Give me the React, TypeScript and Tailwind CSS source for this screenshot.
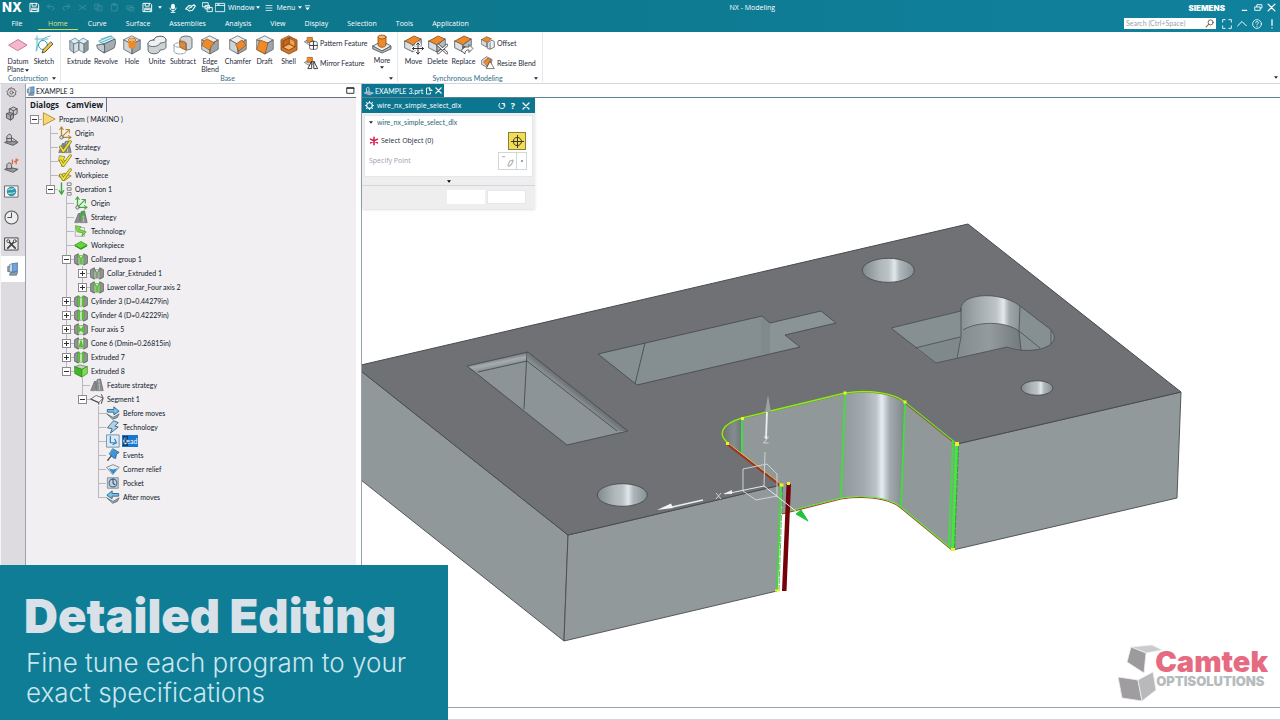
import React from "react";

/* ---------- shared drawing helpers ---------- */

type SvgProps = { children: React.ReactNode; size?: string; box?: string };

function Glyph({ children, size = "size-4", box = "0 0 16 16" }: SvgProps) {
  return (
    <svg viewBox={box} className={`${size} shrink-0`} fill="none" aria-hidden="true" strokeLinejoin="round" strokeLinecap="round">
      {children}
    </svg>
  );
}

function Caret({ className = "text-gray-800" }: { className?: string }) {
  return (
    <svg viewBox="0 0 6 4" className={`h-[3px] w-[4px] shrink-0 ${className}`} aria-hidden="true">
      <path d="M0 0h6L3 4z" fill="currentColor" />
    </svg>
  );
}

const OR = "#ef8a2b";
const EDGE = "#4b5055";

function Cube({ top = "#eceeef", left = "#cfd4d7", right = "#9da5a9" }: { top?: string; left?: string; right?: string }) {
  return (
    <g stroke={EDGE} strokeWidth=".7">
      <path d="M10 1l8 4-8 4.500-8-4.500z" fill={top} />
      <path d="M2 5l8 4.500V19l-8-4.500z" fill={left} />
      <path d="M18 5l-8 4.500V19l8-4.500z" fill={right} />
    </g>
  );
}

/* low solid whose top face is orange */
function Slab() {
  return (
    <g strokeWidth=".8">
      <path d="M1 6l9-5 7 3-8 6z" fill={OR} stroke="#8c4a10" />
      <path d="M1 6l8 4v7l-8-4z" fill="#dde0e2" stroke={EDGE} />
      <path d="M17 4l-8 6v7l8-6z" fill="#b5bbbf" stroke={EDGE} />
    </g>
  );
}

const ribbonIcons: Record<string, React.ReactNode> = {
  datum: <path d="M1 10l9-5.500 9 5.500-9 5.500z" fill="#f6b6cf" stroke="#b0647f" strokeWidth=".8" />,
  sketch: (
    <>
      <path d="M3 1v14M1 4h13M2 16C3 8 8 3 16 1" stroke="#5fb9cb" strokeWidth="1" />
      <circle cx="9" cy="10" r="4.500" stroke="#3a9db5" strokeWidth="1" />
      <path d="M17 7l2 2-8 8-3 1 1-3z" fill="#f2c230" stroke="#3b3b3b" strokeWidth=".8" />
    </>
  ),
  extrude: (
    <g stroke="#55707a" strokeWidth=".7">
      <path d="M1 6l5-3 4 3 4-3 5 3-4 3-5-2-5 2z" fill="#d5f0f6" />
      <path d="M1 6l4 3v9l-4-3z" fill="#b7c0c5" />
      <path d="M5 9l5-2v8l-5 3zM10 7l5 2v9l-5-3z" fill="#d9dee1" />
      <path d="M19 6l-4 3v9l4-3z" fill="#8c969c" />
    </g>
  ),
  revolve: (
    <g strokeWidth=".8">
      <path d="M3 6L15 1l4 3L8 9z" fill="#d5f0f6" stroke="#4aa8bd" />
      <path d="M1 10L8 9c1 3 1 6 0 9l-6-4z" fill="#c5ccd0" stroke={EDGE} />
      <path d="M8 9l11-5c1 4 0 7-1 9L8 18c1-3 1-6 0-9z" fill="#a5adb2" stroke={EDGE} />
      <path d="M5 4l10-3M4 8l12-5" stroke="#4aa8bd" />
    </g>
  ),
  hole: (
    <>
      <Cube />
      <ellipse cx="10" cy="5" rx="4" ry="2" fill="#f7b36b" stroke="#a85b12" strokeWidth=".6" />
      <path d="M6.500 6v6c1 2 6 2 7 0V6c-1 1.500-6 1.500-7 0z" fill={OR} />
    </>
  ),
  unite: (
    <g stroke={EDGE} strokeWidth=".8">
      <path d="M7 5c0-5 12-5 12 0v7c0 2-3 3-6 3 0 5-12 5-12 0V9c0-2 3-4 6-4z" fill="#ccd1d4" />
      <path d="M7 5c0-5 12-5 12 0 0 2-3 3-6 3 0 4-12 5-12 1 0-3 3-4 6-4z" fill="#eef0f1" />
    </g>
  ),
  subtract: (
    <g strokeWidth=".8">
      <path d="M7 4c0-4 12-4 12 0v8c0 2-3 3-6 3V8c-2-1-5-1-6-1z" fill="#d0d5d8" stroke={EDGE} />
      <path d="M7 6c4 0 6 1 6 3v6c-3-1-5-2-6-3z" fill={OR} stroke="#8c4a10" />
      <path d="M1 10c0-3 12-3 12 0v6c0 4-12 4-12 0zM1 10c0 3 12 3 12 0" stroke="#7e868a" strokeDasharray="2 1" />
    </g>
  ),
  edge: (
    <>
      <Cube />
      <path d="M2 10c1-4 3-5 5-6l8 4c-3 1-4 3-5 7z" fill={OR} stroke="#8c4a10" strokeWidth=".7" />
    </>
  ),
  chamfer: (
    <>
      <Cube />
      <path d="M8 9l6-4 4 5-7 6z" fill={OR} stroke="#8c4a10" strokeWidth=".7" />
    </>
  ),
  draft: (
    <>
      <Cube />
      <path d="M5 5l8 3-3 11-8-4z" fill={OR} stroke="#8c4a10" strokeWidth=".7" />
    </>
  ),
  shell: (
    <g stroke="#7a4310" strokeWidth=".8">
      <path d="M10 1l8 4v10l-8 4-8-4V5z" fill="#d3762a" />
      <path d="M10 3l6 3v6l-6-3z" fill="#f0a050" />
      <path d="M10 3L4 6v6l6-3z" fill="#c4661c" />
      <path d="M4 12l6-3 6 3-6 3z" fill="#f9b565" />
    </g>
  ),
  more: (
    <g strokeWidth=".8">
      <path d="M1 12l9-5 9 5-9 5z" fill="#eceeef" stroke={EDGE} />
      <path d="M1 12l9 5 9-5v3l-9 4-9-4z" fill="#b1b7ba" stroke={EDGE} />
      <path d="M6 3v8c1 3 7 3 8 0V3z" fill={OR} stroke="#8c4a10" />
      <ellipse cx="10" cy="3" rx="4" ry="2" fill="#f7b36b" stroke="#8c4a10" />
    </g>
  ),
  move: (
    <>
      <Slab />
      <path d="M14 8v11M8.500 13.500h11M12.500 9.500L14 8l1.500 1.500M12.500 17.500L14 19l1.500-1.500M10 12l-1.500 1.500L10 15M18 12l1.500 1.500L18 15" stroke="#fff" strokeWidth="3" />
      <path d="M14 8v11M8.500 13.500h11M12.500 9.500L14 8l1.500 1.500M12.500 17.500L14 19l1.500-1.500M10 12l-1.500 1.500L10 15M18 12l1.500 1.500L18 15" stroke="#333" />
    </>
  ),
  delete: (
    <>
      <Slab />
      <path d="M10 10l9 8M19 10l-9 8" stroke="#444" strokeWidth="2.600" />
      <path d="M10 10l9 8M19 10l-9 8" stroke="#fff" strokeWidth="1.200" />
    </>
  ),
  replace: (
    <>
      <Slab />
      <path d="M9 12h6V9.500l4 4-4 4V15h-2l-2 2v2l-4-3.500L11 12z" fill="#f5f5f5" stroke="#444" strokeWidth=".8" />
    </>
  ),
  pattern: (
    <g strokeWidth=".9">
      <path d="M1 8l7-4 8 4-7 5z" fill="#d5d9dc" stroke={EDGE} />
      <path d="M5 2h7v7H5z" fill={OR} stroke="#8c4a10" />
      <rect x="8" y="8" width="11" height="11" rx="2" fill="#fff" stroke="#333" />
      <path d="M13.500 8v11M8 13.500h11" stroke="#333" strokeWidth="1.400" />
    </g>
  ),
  mirror: (
    <g strokeWidth=".9">
      <path d="M1 9l7-4 8 4-7 5z" fill="#d5d9dc" stroke={EDGE} />
      <path d="M5 2h7v7H5z" fill={OR} stroke="#8c4a10" />
      <path d="M11 8v10H6zM14 8v10h5z" fill="#fff" stroke="#222" strokeWidth="1.200" />
    </g>
  ),
  offset: (
    <g strokeWidth=".9">
      <path d="M1 5l7-4 7 3-7 5z" fill={OR} stroke="#8c4a10" />
      <path d="M1 5l7 4v7l-7-4z" fill="#d5d9dc" stroke={EDGE} />
      <path d="M10 9l6-3 3 2v8l-6 3-3-1z" fill="#eef0f1" stroke="#333" />
      <path d="M13 10v8" stroke="#333" />
    </g>
  ),
  resize: (
    <g strokeWidth=".9">
      <path d="M1 6l7-5 8 4-2 8-6 3-7-4z" fill="#d5d9dc" stroke={EDGE} />
      <path d="M4 8l6-5 5 3-6 8z" fill={OR} stroke="#8c4a10" />
      <path d="M13 8l6 10H8z" fill="#fff" stroke="#333" />
    </g>
  ),
};

/* ---------- header ---------- */

function IconButton({ label, children, className = "" }: { label: string; children: React.ReactNode; className?: string }) {
  return (
    <button type="button" aria-label={label} className={`flex items-center justify-center ${className}`}>
      {children}
    </button>
  );
}

function SaveIcon() {
  return (
    <Glyph size="size-[11px]">
      <path d="M2 2h10l2 2v10H2zM4.500 2v4h6V2M4 14V9h8v5M5.500 11h5" stroke="#fff" strokeWidth="1.400" />
    </Glyph>
  );
}

function TitleBar() {
  return (
    <div className="flex h-[15px] items-center text-white">
      <div className="flex basis-[57%] items-center">
        <span className="w-[28px] pl-[2px] font-['Inter',sans-serif] text-[13px] leading-[15px] font-extrabold">NX</span>
        <IconButton label="Save" className="w-[12px]"><SaveIcon /></IconButton>
        <div className="ml-[6px] flex w-[94px] items-center gap-[7px] opacity-20">
          <IconButton label="Undo"><Glyph size="size-[9px]"><path d="M3 6h8c4 0 4 7 0 7M6 2L2 6l4 4" stroke="#fff" strokeWidth="1.600" /></Glyph></IconButton>
          <IconButton label="Redo"><Glyph size="size-[9px]"><path d="M13 6H5c-4 0-4 7 0 7M10 2l4 4-4 4" stroke="#fff" strokeWidth="1.600" /></Glyph></IconButton>
          <IconButton label="Cut"><Glyph size="size-[9px]"><path d="M2 4l12 8M2 12l12-8" stroke="#fff" strokeWidth="1.600" /></Glyph></IconButton>
          <IconButton label="Copy"><Glyph size="size-[9px]"><path d="M2 2h7v9H2zM6 5h8v9H6z" stroke="#fff" strokeWidth="1.400" /></Glyph></IconButton>
          <IconButton label="Paste"><Glyph size="size-[9px]"><path d="M3 3h10v11H3zM6 1h4v3H6z" stroke="#fff" strokeWidth="1.400" /></Glyph></IconButton>
          <IconButton label="Repeat"><Glyph size="size-[9px]"><path d="M2 5h9v6H2zM6 8h8v6H6z" stroke="#fff" strokeWidth="1.400" /></Glyph></IconButton>
        </div>
        <IconButton label="Save options" className="ml-[2px] gap-[5px]"><SaveIcon /><Caret className="text-white" /></IconButton>
        <IconButton label="Voice" className="ml-[4px] w-[14px]">
          <Glyph size="size-[10px]"><rect x="5" y="1" width="6" height="9" rx="3" fill="#fff" /><path d="M3 8c0 6 10 6 10 0M8 12v3M5 15h6" stroke="#fff" strokeWidth="1.400" /></Glyph>
        </IconButton>
        <IconButton label="Touch mode" className="ml-[3px] w-[14px]">
          <Glyph size="size-[11px]"><path d="M1 10l5-5 4 1 3-2 2 2-4 6-5 1-2-2z" stroke="#fff" strokeWidth="1.600" /><path d="M6 9l4-2" stroke="#fff" strokeWidth="1.600" /></Glyph>
        </IconButton>
        <IconButton label="Switch window" className="ml-[3px] w-[14px]">
          <Glyph size="size-[11px]"><path d="M1 1h8v6H1zM5 5h6v5H5zM8 8h7v6H8z" fill="#0d7689" stroke="#fff" strokeWidth="1.300" /></Glyph>
        </IconButton>
        <button type="button" className="ml-px flex items-center gap-[2px]">
          <Glyph size="size-[11px]"><path d="M1 2h13v12H1zM1 5h13M4 3.500h2" stroke="#fff" strokeWidth="1.200" /></Glyph>
          <span>Window</span><Caret className="text-white" />
        </button>
        <button type="button" className="ml-[5px] flex items-center gap-[3px]">
          <Glyph size="size-[8px]"><path d="M2 3h12M2 8h12M2 13h12" stroke="#fff" strokeWidth="1.400" /></Glyph>
          <span>Menu</span><Caret className="text-white" />
        </button>
        <IconButton label="Toolbar options" className="ml-[2px]">
          <Glyph size="size-[7px]"><path d="M3 4h10" stroke="#fff" strokeWidth="2" /><path d="M3 8h10l-5 6z" fill="#fff" /></Glyph>
        </IconButton>
      </div>
      <h1>NX - Modeling</h1>
      <div className="ml-auto flex items-center pr-[3px]">
        <span className="mr-[13px] font-['Inter',sans-serif] text-[8px] font-black">SIEMENS</span>
        <IconButton label="Minimize" className="w-[12px]"><Glyph size="size-[9px]"><path d="M4 13h8" stroke="#fff" strokeWidth="2" /></Glyph></IconButton>
        <IconButton label="Restore" className="ml-[2px] w-[12px]"><Glyph size="size-[9px]"><path d="M2 7h9v6H2zM5 7V3h9v6h-3" stroke="#fff" strokeWidth="1.600" /></Glyph></IconButton>
        <IconButton label="Close" className="ml-[2px] w-[11px]"><Glyph size="size-[9px]"><path d="M2 2l12 12M14 2L2 14" stroke="#fff" strokeWidth="2.200" /></Glyph></IconButton>
      </div>
    </div>
  );
}

const menus = ["Curve", "Surface", "Assemblies", "Analysis", "View", "Display", "Selection", "Tools", "Application"];

function MenuBar() {
  return (
    <div className="flex h-[17px] items-stretch text-white">
      <nav className="flex items-stretch gap-px">
        <button type="button" className="w-[37px] pr-[3px] text-center">File</button>
        <button type="button" className="mb-[2px] border-b border-[#d8d35a] px-[10px] pt-[3px] text-[#dfe08a]">Home</button>
        {menus.map((m) => (
          <button key={m} type="button" className="px-[9px]">{m}</button>
        ))}
      </nav>
      <div className="ml-auto flex items-center gap-[5px] pr-[3px]">
        <label className="mr-px flex h-[11px] w-[92px] items-center bg-white pr-[2px]">
          <span className="sr-only">Search</span>
          <input type="text" placeholder="Search (Ctrl+Space)" className="h-[11px] min-w-0 flex-1 px-[2px] font-['Lato',sans-serif] text-[7px] leading-[11px] text-gray-700 outline-none placeholder:text-gray-400" />
          <Glyph size="size-[9px]"><circle cx="10" cy="6" r="4.500" stroke="#444" strokeWidth="1.400" /><path d="M7 9l-5 5" stroke="#a06a3a" strokeWidth="2" /></Glyph>
        </label>
        <IconButton label="Full screen"><Glyph size="size-[10px]"><path d="M1 5V1h4M11 1h4v4M15 11v4h-4M5 15H1v-4" stroke="#fff" strokeWidth="1.400" /></Glyph></IconButton>
        <IconButton label="Collapse ribbon"><Glyph size="size-[10px]"><path d="M1 11l7-7 7 7" stroke="#fff" strokeWidth="1.600" /></Glyph></IconButton>
        <IconButton label="Help">
          <Glyph size="size-[10px]"><circle cx="8" cy="8" r="7" stroke="#fff" strokeWidth="1.300" /><path d="M6 6c0-3 4-3 4 0 0 2-2 1.500-2 3.500M8 12v.2" stroke="#fff" strokeWidth="1.400" /></Glyph>
        </IconButton>
        <IconButton label="Notifications"><Glyph size="size-[10px]"><path d="M8 1v9M8 14v.5" stroke="#fff" strokeWidth="2" /></Glyph></IconButton>
      </div>
    </div>
  );
}

/* ---------- ribbon ---------- */

function Tool({ icon, label, width, drop }: { icon: string; label: string; width: string; drop?: "inline" | "below" }) {
  return (
    <button type="button" className={`flex flex-col items-center ${width}`}>
      <Glyph size="size-[20px]" box="0 0 20 20">{ribbonIcons[icon]}</Glyph>
      <span className="mt-[2px] text-center leading-[8px]">
        {label}
        {drop === "inline" && <span className="ml-px inline-block align-middle"><Caret /></span>}
      </span>
      {drop === "below" && <span className="mt-[2px]"><Caret /></span>}
    </button>
  );
}

function SmallTool({ icon, label }: { icon: string; label: string }) {
  return (
    <button type="button" className="flex h-[20px] items-center gap-[2px] whitespace-nowrap">
      <Glyph size="size-[14px]" box="0 0 20 20">{ribbonIcons[icon]}</Glyph>
      {label}
    </button>
  );
}

function Group({ name, children, className = "" }: { name: string; children: React.ReactNode; className?: string }) {
  return (
    <section className={`flex flex-col border-r border-gray-200 ${className}`}>
      <div className="flex flex-1">{children}</div>
      <div className="flex h-[8px] items-center">
        <h2 className="flex-1 text-center leading-[8px] text-[#2f6c84]">{name}</h2>
        <Caret />
      </div>
    </section>
  );
}

function Ribbon() {
  return (
    <div className="flex h-[52px] items-stretch border-b border-gray-300 bg-white pb-px font-['Lato',sans-serif] text-[7px] text-gray-800">
      <Group name="Construction" className="pr-[4px] pl-[4px]">
        <div className="flex pt-[3px]">
          <Tool icon="datum" label="Datum Plane" width="w-[28px]" drop="inline" />
          <Tool icon="sketch" label="Sketch" width="w-[24px]" />
        </div>
      </Group>
      <Group name="Base" className="pr-[4px] pl-[5px]">
        <div className="flex pt-[3px]">
          <Tool icon="extrude" label="Extrude" width="w-[26px]" />
          <Tool icon="revolve" label="Revolve" width="w-[28px]" />
          <Tool icon="hole" label="Hole" width="w-[24px]" />
          <Tool icon="unite" label="Unite" width="w-[26px]" />
          <Tool icon="subtract" label="Subtract" width="w-[26px]" />
          <Tool icon="edge" label="Edge Blend" width="w-[28px]" />
          <Tool icon="chamfer" label="Chamfer" width="w-[28px]" />
          <Tool icon="draft" label="Draft" width="w-[25px]" />
          <Tool icon="shell" label="Shell" width="w-[23px]" />
        </div>
        <div className="w-[71px] pt-px pl-[4px]">
          <SmallTool icon="pattern" label="Pattern Feature" />
          <SmallTool icon="mirror" label="Mirror Feature" />
        </div>
        <div className="pt-[2px]">
          <Tool icon="more" label="More" width="w-[22px]" drop="below" />
        </div>
      </Group>
      <Group name="Synchronous Modeling" className="pr-[4px] pl-[3px]">
        <div className="flex pt-[3px]">
          <Tool icon="move" label="Move" width="w-[25px]" />
          <Tool icon="delete" label="Delete" width="w-[23px]" />
          <Tool icon="replace" label="Replace" width="w-[29px]" />
        </div>
        <div className="w-[60px] pt-px pl-[3px]">
          <SmallTool icon="offset" label="Offset" />
          <SmallTool icon="resize" label="Resize Blend" />
        </div>
      </Group>
      <div className="ml-auto self-end pr-[2px] pb-[3px]"><Caret /></div>
    </div>
  );
}

/* ---------- resource bar ---------- */

const barIcons: { label: string; art: React.ReactNode }[] = [
  { label: "Assembly Navigator", art: <g stroke="#555" strokeWidth="1"><path d="M6 3l4-2 4 2v5l-4 2-4-2z" fill="#c9c9cb" /><path d="M6 3l4 2 4-2M10 5v5" /><path d="M3 8l3-1 4 1v5l-3 2-4-2zM3 8l4 2 3-2M7 10v5" fill="#aaa" /></g> },
  { label: "Constraint Navigator", art: <g stroke="#555" strokeWidth="1"><path d="M1 11l5-2 9 2-5 3z" fill="#999" /><path d="M3 10V5c2-4 5-3 5 0v5z" fill="#c6c6c8" /><path d="M8 6l6 4M3 7h5" /></g> },
  { label: "Part Navigator", art: <g stroke="#555" strokeWidth="1"><path d="M1 12l5-2 9 2-5 3z" fill="#999" /><path d="M3 11V7c2-3 5-2 5 1v3z" fill="#c6c6c8" /><path d="M9 2v4M13 1v5M11 4l4-2" stroke="#e2673c" strokeWidth="1.400" /></g> },
  { label: "Web Browser", art: <g><rect x="1" y="2" width="14" height="12" fill="#f3f6f8" stroke="#666" /><circle cx="8" cy="8" r="5" fill="#2f93ab" /><path d="M5 6c2-2 3 1 5-1M5 10c2-1 4 1 6-1" stroke="#bfe6d0" strokeWidth="1.200" /></g> },
  { label: "History", art: <g stroke="#555" strokeWidth="1.100"><circle cx="8" cy="8" r="7" fill="#eee" /><path d="M8 3v5H4" /></g> },
  { label: "Process Studio", art: <g stroke="#444"><rect x="1" y="2" width="14" height="13" fill="#e9e9ea" /><path d="M4 5l8 8M12 5l-8 8" strokeWidth="1.800" /><circle cx="4.500" cy="5.500" r="1.500" fill="#fff" /><circle cx="11.500" cy="5.500" r="1.500" fill="#fff" /></g> },
];

function MonitorArt() {
  return (
    <g strokeWidth=".8">
      <path d="M7 2l6-1v10l-6 1z" fill="#69a5e0" stroke="#35618c" />
      <path d="M7 2L4 3v8l3 1z" fill="#c9d6e0" stroke="#6c8296" />
      <path d="M4 5H2v6h2M5 12l-1 3h8l1-3z" fill="#8aa0b2" stroke="#55697a" />
    </g>
  );
}

function ResourceBar() {
  return (
    <aside className="flex w-[25px] shrink-0 flex-col border-l border-gray-100 bg-[#dddbdf] pr-[3px]">
      <IconButton label="Settings" className="h-[16px] w-[20px]">
        <Glyph size="size-[11px]">
          <path d="M8 1l1.500 2 2.500-.5.500 2.500L15 6.500 13.500 8.500l1 2.500-2.500.7L11 14l-3-.8L5.500 14 4.500 11.700 2 11l.8-2.500L1 6.500l2.500-1.500L4 2.500l2.500.5z" stroke="#555" strokeWidth="1.200" />
          <circle cx="8" cy="8" r="2.400" stroke="#555" strokeWidth="1.200" />
        </Glyph>
      </IconButton>
      {barIcons.map((b) => (
        <IconButton key={b.label} label={b.label} className="h-[26px] w-[21px]">
          <Glyph size="size-[15px]">{b.art}</Glyph>
        </IconButton>
      ))}
      <IconButton label="CamView" className="h-[26px] w-[24px] bg-white">
        <Glyph size="size-[14px]"><MonitorArt /></Glyph>
      </IconButton>
    </aside>
  );
}

/* ---------- program tree ---------- */

type Node = { label: string; icon: string; open?: boolean; kids?: Node[]; closed?: boolean; selected?: boolean };

const tree: Node = {
  label: "Program ( MAKINO )", icon: "program", open: true, kids: [
    { label: "Origin", icon: "originY" },
    { label: "Strategy", icon: "strategyY" },
    { label: "Technology", icon: "techY" },
    { label: "Workpiece", icon: "workY" },
    { label: "Operation 1", icon: "operation", open: true, kids: [
      { label: "Origin", icon: "originG" },
      { label: "Strategy", icon: "strategyG" },
      { label: "Technology", icon: "techG" },
      { label: "Workpiece", icon: "workG" },
      { label: "Collared group 1", icon: "collar", open: true, kids: [
        { label: "Collar_Extruded 1", icon: "collarGray", closed: true },
        { label: "Lower collar_Four axis 2", icon: "collar", closed: true },
      ] },
      { label: "Cylinder 3 (D=0.44279in)", icon: "cylinder", closed: true },
      { label: "Cylinder 4 (D=0.42229in)", icon: "cylinder", closed: true },
      { label: "Four axis 5", icon: "four", closed: true },
      { label: "Cone 6 (Dmin=0.26815in)", icon: "cone", closed: true },
      { label: "Extruded 7", icon: "cylinder", closed: true },
      { label: "Extruded 8", icon: "extruded", open: true, kids: [
        { label: "Feature strategy", icon: "strategy" },
        { label: "Segment 1", icon: "segment", open: true, kids: [
          { label: "Before moves", icon: "before" },
          { label: "Technology", icon: "techB" },
          { label: "Lead", icon: "lead", selected: true },
          { label: "Events", icon: "events" },
          { label: "Corner relief", icon: "corner" },
          { label: "Pocket", icon: "pocket" },
          { label: "After moves", icon: "after" },
        ] },
      ] },
    ] },
  ],
};

const road = (
  <>
    <path d="M1 14L5 4h2l-1 10zM7 14L8 2l4-1 3 13z" fill="#8b8f92" stroke="#555" strokeWidth=".7" />
    <path d="M10 3l1 10" stroke="#e2e4e5" strokeWidth=".8" strokeDasharray="2 2" />
  </>
);
const check = <path d="M3 8l3 5 8-11" stroke="#77700e" strokeWidth="3.400" />;
const checkIn = <path d="M3 8l3 5 8-11" stroke="#f0e23a" strokeWidth="2" />;
const green = "#52c22d";

function Block({ children }: { children: React.ReactNode }) {
  return (
    <>
      <path d="M1 4l4-2v13l-4-2zM15 4l-4-2v13l4-2z" fill="#8f958f" stroke="#4c514c" strokeWidth=".8" />
      <path d="M5 4h6v10H5z" fill="#dcebd4" stroke="#6a7a64" strokeWidth=".6" />
      {children}
    </>
  );
}

const axes = (c: string) => (
  <>
    <path d="M4 2v11h10M4 13l8-8" stroke={c} strokeWidth="1.500" />
    <path d="M2 4l2-3 2 3M12 11l3 2-3 2M9 4l4 0v4" stroke={c} strokeWidth="1.200" />
    <circle cx="4" cy="13" r="2" fill="#ddd" stroke="#555" strokeWidth=".8" />
  </>
);

const treeIcons: Record<string, React.ReactNode> = {
  program: <path d="M2 1l13 7-13 7z" fill="#f7d774" stroke="#b08a2a" />,
  originY: axes("#b98a2c"),
  originG: axes("#3fae3a"),
  strategyY: <>{road}{check}{checkIn}</>,
  strategyG: <>{road}<path d="M7 12c0-5 2-5 4-9M8 4l3-2 1 4" stroke="#39b234" strokeWidth="1.600" /></>,
  strategy: road,
  techY: <><path d="M2 2l6 1-2 4 5 1-7 6 1-5-4-1z" fill="#f0e23a" stroke="#77700e" strokeWidth=".7" />{check}{checkIn}</>,
  techG: <><rect x="2" y="4" width="10" height="10" fill="#eee" stroke="#999" strokeWidth=".8" /><path d="M2 2l6 1-2 3 8 3-5 5 1-4-6-1z" fill="#7ddb3d" stroke="#3f8f1f" strokeWidth=".7" /></>,
  techB: <path d="M9 1l5 2-4 4 4 1-9 7 2-5-5-1z" fill="#a9d3ee" stroke="#3d5f78" strokeWidth="1" />,
  workY: <><path d="M1 9l6-3 8 3-7 5z" fill="#e4d93a" stroke="#77700e" strokeWidth=".8" />{check}{checkIn}</>,
  workG: <><path d="M1 8l7-4 7 4-7 4z" fill="#63d63a" stroke="#2d8a1c" strokeWidth=".8" /><path d="M1 8l7 4 7-4v1.500l-7 4-7-4z" fill="#2d8a1c" /></>,
  operation: <><path d="M4 1v12M1.500 10L4 14l2.500-4" stroke="#39a834" strokeWidth="1.600" /><path d="M11 1h4v3h-4zM11 6.500h4v3h-4zM11 12h4v3h-4z" stroke="#777" strokeWidth="1" /></>,
  collar: <Block><path d="M5 4l2 3v6M11 4L9 7v6" stroke={green} strokeWidth="1.800" /></Block>,
  collarGray: <Block><path d="M5 4l2 3v6M11 4L9 7v6" stroke="#7b8578" strokeWidth="1.600" /></Block>,
  cylinder: <Block><path d="M6 3v10M10 3v10" stroke={green} strokeWidth="2.200" /></Block>,
  four: <Block><path d="M5 3l3 5 3-5v10l-3-3-3 3z" fill={green} /></Block>,
  cone: <Block><path d="M8 3l3 10H5z" fill={green} /></Block>,
  extruded: <g stroke="#2f7a20" strokeWidth=".7"><path d="M1 3l6-2 8 2-6 3z" fill="#c9d4c4" /><path d="M1 3l8 3v9l-8-4z" fill="#43b52a" /><path d="M15 3L9 6v9l6-4z" fill="#7fdc55" /></g>,
  segment: <><path d="M1 8l6-4 8 3-5 5z" fill="#f3f3f3" stroke="#666" strokeWidth="1" /><path d="M1 8l9 4v2M13 3l2 4-2 6" stroke="#555" strokeWidth="1.200" /></>,
  before: <><path d="M1 9l7 4 7-4-2 4-5 2z" fill="#9aa5ad" stroke="#4d5c66" strokeWidth=".8" /><path d="M2 4h7V1l6 5-6 4V7H2z" fill="#7ac2ec" stroke="#2d5f80" strokeWidth="1" /></>,
  after: <><path d="M1 9l7 4 7-4-2 4-5 2z" fill="#9aa5ad" stroke="#4d5c66" strokeWidth=".8" /><path d="M14 4H7V1L1 6l6 4V7h7z" fill="#7ac2ec" stroke="#2d5f80" strokeWidth="1" /></>,
  lead: <><rect x="1" y="1" width="14" height="14" fill="#dbeaf5" stroke="#6b8ba3" strokeWidth="1" /><path d="M5 3v7h5M8 12l4-2-2-4" stroke="#2f7fb8" strokeWidth="1.400" /></>,
  events: <><path d="M8 1l7 4-3 2-1 5-3-1-4-4z" fill="#3f95d6" stroke="#1e5f93" strokeWidth=".9" /><path d="M6 9l-4 5" stroke="#555" strokeWidth="1.600" /></>,
  corner: <><path d="M1 6l7-3 7 3-7 8z" fill="#e8eef2" stroke="#667" strokeWidth=".8" /><path d="M3 7l5 1.500L13 7l-5 7z" fill="#2f8fd0" /></>,
  pocket: <><path d="M2 2h12v12H2z" fill="#c8d0d6" stroke="#69747c" strokeWidth=".8" /><circle cx="8" cy="8" r="4.500" stroke="#3f6f92" strokeWidth="1.300" /><path d="M8 3v5l2 2" stroke="#2f5f82" strokeWidth="1.300" /></>,
};

function Guide({ line, tee, box }: { line: "none" | "full" | "half"; tee?: boolean; box?: "plus" | "minus" }) {
  return (
    <svg viewBox="0 0 16 14" className="h-[14px] w-[16px] shrink-0" fill="none" shapeRendering="crispEdges" aria-hidden="true">
      {line !== "none" && <path d={line === "full" ? "M8.500 0v14" : "M8.500 0v7"} stroke="#b9b8bc" />}
      {tee && <path d="M8 7.500h8" stroke="#b9b8bc" />}
      {box && <rect x="4.500" y="3.500" width="8" height="8" fill="#fff" stroke="#8a8a8f" />}
      {box && <path d={box === "plus" ? "M6 7.500h5M8.500 5v5" : "M6 7.500h5"} stroke="#333" />}
    </svg>
  );
}

function Hourglass() {
  return (
    <svg viewBox="0 0 8 12" className="absolute top-0 left-0 h-[12px] w-[7px]" aria-hidden="true">
      <path d="M1 1h6M1 11h6M2 1v3l2 2-2 2v3M6 1v3L4 6l2 2v3" fill="#fff" stroke="#1b2c3f" strokeWidth="1.100" />
    </svg>
  );
}

function TreeItem({ node, trail, last, root }: { node: Node; trail: boolean[]; last: boolean; root?: boolean }) {
  const box = node.open ? "minus" : node.closed ? "plus" : undefined;
  return (
    <li>
      <div className="flex h-[14px] items-center">
        {trail.map((on, i) => <Guide key={i} line={on ? "full" : "none"} />)}
        <Guide line={root ? "none" : last ? "half" : "full"} tee box={box} />
        <Glyph size="size-[14px]">{treeIcons[node.icon]}</Glyph>
        {node.selected ? (
          <span className="relative ml-[2px] bg-[#1878cf] px-px leading-[12px] text-white">{node.label}<Hourglass /></span>
        ) : (
          <span className="ml-[3px] whitespace-nowrap">{node.label}</span>
        )}
      </div>
      {node.kids && (
        <ul>
          {node.kids.map((k, i) => (
            <TreeItem key={k.label + i} node={k} trail={[...trail, root ? false : !last]} last={i === node.kids!.length - 1} />
          ))}
        </ul>
      )}
    </li>
  );
}

function CamPanel() {
  return (
    <section className="flex w-[337px] shrink-0 flex-col border-x border-x-gray-400 bg-white pr-[5px] font-['Lato',sans-serif] text-[7px] text-gray-900">
      <header className="flex h-[14px] items-center border-b border-gray-500 pr-px">
        <Glyph size="size-[10px]"><MonitorArt /></Glyph>
        <h2 className="flex-1">EXAMPLE 3</h2>
        <IconButton label="Maximize panel"><Glyph size="size-[9px]"><path d="M2 3h12v10H2z" stroke="#222" strokeWidth="1.600" /><path d="M2 4h12" stroke="#222" strokeWidth="2" /></Glyph></IconButton>
      </header>
      <div className="flex-1 bg-[#f1eff2]">
        <div className="flex h-[14px] items-stretch font-['Open_Sans',sans-serif] text-[8px] leading-[14px] font-bold">
          <button type="button" className="pr-[4px] pl-[4px]">Dialogs</button>
          <button type="button" className="border-r border-gray-500 px-[3px] leading-[12px]">CamView</button>
        </div>
        <ul><TreeItem node={tree} trail={[]} last root /></ul>
      </div>
    </section>
  );
}

/* ---------- model viewport ---------- */

function Model() {
  const ln = "#484c4f";
  return (
    <svg viewBox="362 98 918 609" className="absolute inset-0 size-full" fill="none" role="img" aria-label="Part model" strokeLinejoin="round">
      <defs>
        <linearGradient id="hole"><stop offset="0" stopColor="#7f888b" /><stop offset=".35" stopColor="#b0b8bc" /><stop offset=".5" stopColor="#bac2c6" /><stop offset=".62" stopColor="#e0e6e9" /><stop offset=".72" stopColor="#aeb7bb" /><stop offset="1" stopColor="#858e91" /></linearGradient>
        <linearGradient id="bend"><stop offset="0" stopColor="#8f989b" /><stop offset=".35" stopColor="#a2aaaf" /><stop offset=".55" stopColor="#bcc4ca" /><stop offset=".64" stopColor="#e6edf5" /><stop offset=".76" stopColor="#a3abb0" /><stop offset="1" stopColor="#7e868a" /></linearGradient>
        <linearGradient id="nook"><stop offset="0" stopColor="#6d7174" /><stop offset=".6" stopColor="#858c8f" /><stop offset="1" stopColor="#6f7679" /></linearGradient>
        <linearGradient id="well"><stop offset="0" stopColor="#868f92" /><stop offset=".3" stopColor="#a3abaf" /><stop offset=".6" stopColor="#bdc4c8" /><stop offset=".72" stopColor="#e3e8eb" /><stop offset=".82" stopColor="#a0a8ac" /><stop offset="1" stopColor="#899295" /></linearGradient>
        <linearGradient id="taper"><stop offset="0" stopColor="#838b8e" /><stop offset=".5" stopColor="#939b9e" /><stop offset="1" stopColor="#737a7d" /></linearGradient>
        <linearGradient id="lip" gradientUnits="userSpaceOnUse" x1="572" y1="396" x2="580" y2="386"><stop offset="0" stopColor="#8b9395" /><stop offset=".5" stopColor="#6d7274" /><stop offset="1" stopColor="#55595c" /></linearGradient>
        <linearGradient id="lip2" gradientUnits="userSpaceOnUse" x1="500" y1="357" x2="502" y2="367"><stop offset="0" stopColor="#6d7274" /><stop offset=".5" stopColor="#a5adb0" /><stop offset="1" stopColor="#858d90" /></linearGradient>
      </defs>

      {/* outer faces */}
      <path d="M361 371L568 535 564 641 361 480z" fill="#90989a" stroke={ln} strokeWidth=".9" />
      <path d="M568 535L781 485 777 591 564 641z" fill="#91999b" stroke={ln} strokeWidth=".9" />
      <path d="M957 444L1181 392 1177 498 953 550z" fill="#91999b" stroke={ln} strokeWidth=".9" />
      <path d="M361 365L968 224 1181 392 957 444 905 402C894 393 868 389 845 393L742 418C722 424 717 434 728 444L781 485 568 535 361 371z" fill="#6f7174" stroke={ln} strokeWidth="1" />

      {/* open profile walls */}
      <path d="M742 418L845 393 841 498 782 514 781 485 741 453z" fill="#90989a" />
      <path d="M742 418C722 424 717 434 728 444L741 453z" fill="url(#nook)" />
      <path d="M845 393C868 389 894 393 905 402L901 507C888 496 862 495 841 498z" fill="url(#bend)" />
      <path d="M905 402L957 444 953 550 901 507z" fill="#90989a" />

      {/* round holes */}
      <g stroke={ln} strokeWidth=".9" fill="url(#hole)">
        <ellipse cx="888.300" cy="270.300" rx="26" ry="12" />
        <ellipse cx="1037" cy="388" rx="16" ry="7.300" />
        <ellipse cx="622.300" cy="495" rx="25" ry="11.300" />
      </g>

      {/* chamfered rectangular pocket */}
      <path d="M467 366L528 352 628 431 567 445z" fill="#8c9497" />
      <path d="M467 366L528 352 527 361 478 372z" fill="url(#lip2)" />
      <path d="M528 352L628 431 617 431 527 361z" fill="url(#lip)" />
      <path d="M467 366L528 352 628 431 567 445zM478 372L527 361 617 431M527 352L524 409" stroke={ln} strokeWidth=".9" />

      {/* stepped pocket */}
      <path d="M598 354L762 316 770 323 821 311 836 323 785 335 800 347 637 385z" fill="#858e90" />
      <path d="M762 316L770 323 821 311 836 323 785 335 800 347 761 356z" fill="#8a9395" />
      <path d="M761 316l9 7v30l-9 2z" fill="#80898b" />
      <path d="M598 354L762 316 770 323 821 311 836 323 785 335 800 347 637 385zM645 343L635 384" stroke={ln} strokeWidth=".9" />

      {/* tapered pocket */}
      <path d="M891 328L961 311C958 292 1002 291 1020 306L1050 329C1066 346 1033 356 1007 347L936 363z" fill="#868f91" />
      <path d="M915 348L960 337 956 358 936 363z" fill="#7f888b" />
      <path d="M961 311C958 292 1002 291 1020 306L1019 331C1005 321 975 321 961 333z" fill="url(#well)" />
      <path d="M961 333C975 321 1005 321 1019 331L1021 349 1007 347 957 358z" fill="url(#taper)" />
      <path d="M891 328L961 311C958 292 1002 291 1020 306L1050 329C1066 346 1033 356 1007 347L936 363zM915 348L960 337M961 308L961 337 957 358M963 330C978 321 1005 321 1019 331L1040 348M1020 306L1019 331 1021 350M1051 330V344" stroke={ln} strokeWidth=".8" />

      {/* tool path */}
      <path d="M905 403L957 445M782 514L841 499C862 496 888 497 901 508L952 550" stroke="#a5411d" strokeWidth="1.200" />
      <path d="M728 443C717 434 722 424 742 418L845 393C868 389 894 393 905 402" stroke="#8a6a20" strokeWidth="2.200" />
      <path d="M728 443C717 434 722 424 742 418L845 393C868 389 894 393 905 402" stroke="#7df02c" strokeWidth="1.500" />
      <path d="M905 402L957 444M785 512L841 498C862 495 888 496 901 507L953 550" stroke="#5fe339" strokeWidth="1.200" />
      <path d="M727 444L781 486" stroke="#a5301c" strokeWidth="2" />
      <path d="M728 443L781 484" stroke="#d8c22b" strokeWidth=".8" />
      <path d="M742 418V452M845 393L841 498M905 402L901 507" stroke="#3fe03c" strokeWidth="1.800" />
      <path d="M781 485L777 591M953 441L949 547" stroke="#3fe03c" strokeWidth="2" />
      <path d="M957 445L953 549" stroke="#42e83e" strokeWidth="3.600" />
      <path d="M958.500 445L954.500 549M782.500 487L779 590" stroke="#2e6b2a" strokeWidth=".6" strokeDasharray="6 1" />
      <path d="M786.500 484L791 484 786.500 591 782 591z" fill="#740309" />
      <path d="M726 442h3v3h-3zM741 417h3v3h-3zM843.500 391.500h3v3h-3zM903.500 400.500h3v3h-3zM955 442h4v4h-4zM779.500 483.500h4v3h-4zM787 482h3v3h-3zM951 548h4v3h-4zM775 589.500h5v2h-5z" fill="#e8f52a" />

      {/* coordinate triad */}
      <g stroke="#cfd3d6" strokeWidth="1">
        <path d="M743 469L767 464 777 474V496L756 500 743 491z" />
        <path d="M765 452L764 486" />
        <path d="M764 486L725 494M764 486L797 512" stroke="#e9ebec" />
        <path d="M716 493l5 6M721 493l-5 6" />
        <path d="M763.500 437h5l-5 6h5" />
      </g>
      <path d="M767 412L766 439" stroke="#eceeef" strokeWidth="1.800" />
      <path d="M768 395L771 412H765z" fill="#9da1a4" />
      <path d="M723 494l9-4v4z" fill="#eee" />
      <path d="M703 500L672 507" stroke="#eceeef" strokeWidth="1.600" />
      <path d="M657 510L671 503.500 673 508z" fill="#f4f5f6" />
      <path d="M796 514L801 510 808 521z" fill="#22c33c" stroke="#22c33c" />
    </svg>
  );
}

function CompanyLogo() {
  return (
    <div className="absolute right-[12px] bottom-[6px] flex items-start">
      <svg viewBox="1114 643 48 58" className="h-[58px] w-[48px]" aria-hidden="true" stroke="#efefef" strokeWidth=".8">
        <path d="M1129 647L1150 645 1160 650 1144 653z" fill="#c9cbcc" />
        <path d="M1129 647L1144 653 1142 673 1125 662z" fill="#9d9a9d" />
        <path d="M1116 677L1136 680 1140 701 1120 698z" fill="#a09da0" />
        <path d="M1136 680L1151 672 1154 690 1140 701z" fill="#b9b8ba" />
      </svg>
      <div className="mt-[6px] -ml-[9px] font-['Inter',sans-serif] font-black whitespace-nowrap">
        <p className="text-[29px] leading-[26px] text-[#e66a80]">Camtek</p>
        <p className="pl-px text-[13px] leading-[13px] text-[#b6bcbd]">OPTISOLUTIONS</p>
      </div>
    </div>
  );
}

function SelectDialog() {
  return (
    <form className="absolute top-0 left-0 w-[173px] bg-[#efeeef] text-[7px] shadow" onSubmit={(e) => e.preventDefault()}>
      <header className="flex h-[15px] items-center bg-[#0c7690] px-[3px] text-white">
        <Glyph size="size-[9px]"><circle cx="8" cy="8" r="5" stroke="#fff" strokeWidth="2" /><path d="M8 0v3M8 13v3M0 8h3M13 8h3M2.500 2.500l2 2M11.500 11.500l2 2M13.500 2.500l-2 2M4.500 11.500l-2 2" stroke="#fff" strokeWidth="1.600" /></Glyph>
        <h2 className="ml-[3px] flex-1 text-[7px]">wire_nx_simple_select_dlx</h2>
        <IconButton label="Reset" className="w-[11px]"><Glyph size="size-[8px]"><path d="M3 3c-3 5 0 10 5 10s8-6 4-10M12 3H8M12 3v4" stroke="#fff" strokeWidth="2" /></Glyph></IconButton>
        <IconButton label="Help" className="w-[12px] text-[9px] font-bold">?</IconButton>
        <IconButton label="Close" className="w-[13px]"><Glyph size="size-[8px]"><path d="M2 2l12 12M14 2L2 14" stroke="#fff" strokeWidth="2.600" /></Glyph></IconButton>
      </header>
      <div className="px-[2px] pt-[2px]">
        <fieldset className="border border-gray-200 bg-white px-[4px] pb-[5px]">
          <button type="button" className="flex h-[12px] items-center gap-[4px] font-['Lato',sans-serif] text-[#2a6672]"><Caret />wire_nx_simple_select_dlx</button>
          <div className="mt-[3px] flex h-[20px] items-center pr-[2px]">
            <Glyph size="size-[10px]"><path d="M8 2v12M2.500 5l11 6M13.500 5l-11 6" stroke="#d3164f" strokeWidth="2.400" /></Glyph>
            <span className="ml-[2px] flex-1 text-gray-800">Select Object (0)</span>
            <IconButton label="Select object" className="size-[18px] border border-[#8c8030] bg-[#f1dc5c]">
              <Glyph size="size-[13px]"><circle cx="8" cy="8" r="5" stroke="#3b3717" strokeWidth="1.200" /><path d="M8 0v16M0 8h16" stroke="#3b3717" strokeWidth="1.200" /></Glyph>
            </IconButton>
          </div>
          <div className="flex h-[20px] items-center pr-px text-gray-400">
            <span className="flex-1">Specify Point</span>
            <IconButton label="Point constructor" className="h-[18px] w-[19px] border border-gray-300">
              <Glyph size="size-[14px]"><path d="M2 3h2M8 13l2-5 4-1-2 5-3 2z" stroke="#b5b5b5" strokeWidth="1.400" /></Glyph>
            </IconButton>
            <IconButton label="Point options" className="h-[18px] w-[10px] border border-l-0 border-gray-300"><span className="size-[2px] bg-gray-400" /></IconButton>
          </div>
        </fieldset>
      </div>
      <button type="button" aria-label="Show more" className="flex h-[9px] w-full items-center justify-center border-b border-gray-300"><Caret className="text-black" /></button>
      <div className="flex h-[23px] justify-end gap-[2px] pt-[4px] pr-[9px]">
        <button type="button" aria-label="OK" className="h-[14px] w-[38px] bg-white" />
        <button type="button" aria-label="Cancel" className="h-[14px] w-[39px] border border-gray-200 bg-white" />
      </div>
    </form>
  );
}

function Workspace() {
  return (
    <main className="flex min-w-0 flex-1 flex-col bg-white">
      <div className="flex h-[13px] shrink-0 font-['Lato',sans-serif] text-[7px] text-white">
        <div className="flex items-center bg-[#0c7690] px-[2px]">
          <Glyph size="size-[10px]"><path d="M1 11l5-2 9 2-5 3z" fill="#9ab" stroke="#dde" /><path d="M4 9V4c2-3 4-2 4 1v4" stroke="#dde" strokeWidth="1.400" /></Glyph>
          <span className="ml-px whitespace-nowrap">EXAMPLE 3.prt</span>
          <Glyph size="ml-[2px] size-[8px]"><path d="M9 2H3v12h8v-3M9 2v5h5M9 2l4 4" stroke="#fff" strokeWidth="1.800" /></Glyph>
          <IconButton label="Close tab" className="ml-[2px]"><Glyph size="size-[7px]"><path d="M2 2l12 12M14 2L2 14" stroke="#fff" strokeWidth="3" /></Glyph></IconButton>
        </div>
      </div>
      <div className="relative min-h-0 flex-1 border-t border-b border-t-[#5a8793] border-b-gray-400">
        <Model />
        <SelectDialog />
        <CompanyLogo />
      </div>
      <div className="h-[12px] border-b border-gray-300" />
    </main>
  );
}

function Banner() {
  return (
    <div className="absolute bottom-0 left-0 w-[448px] bg-[#0f7d95] px-[24px] pt-[24px] pb-[12px] font-['Inter',sans-serif]">
      <p className="text-[47px] leading-[54px] font-black whitespace-nowrap text-[#d9e1e8]">Detailed Editing</p>
      <p className="mt-[5px] pl-[2px] text-[26px] leading-[30px] font-light text-[#cbe6ee]">Fine tune each program to your exact specifications</p>
    </div>
  );
}

export default function App() {
  return (
    <div className="relative flex h-screen flex-col overflow-hidden bg-white font-['Open_Sans','Noto_Sans',sans-serif] text-[7px] leading-[10px]">
      <header className="shrink-0 bg-linear-to-r from-[#0c7487] to-[#10819d]">
        <TitleBar />
        <MenuBar />
      </header>
      <Ribbon />
      <div className="flex min-h-0 flex-1">
        <ResourceBar />
        <CamPanel />
        <Workspace />
      </div>
      <Banner />
    </div>
  );
}
